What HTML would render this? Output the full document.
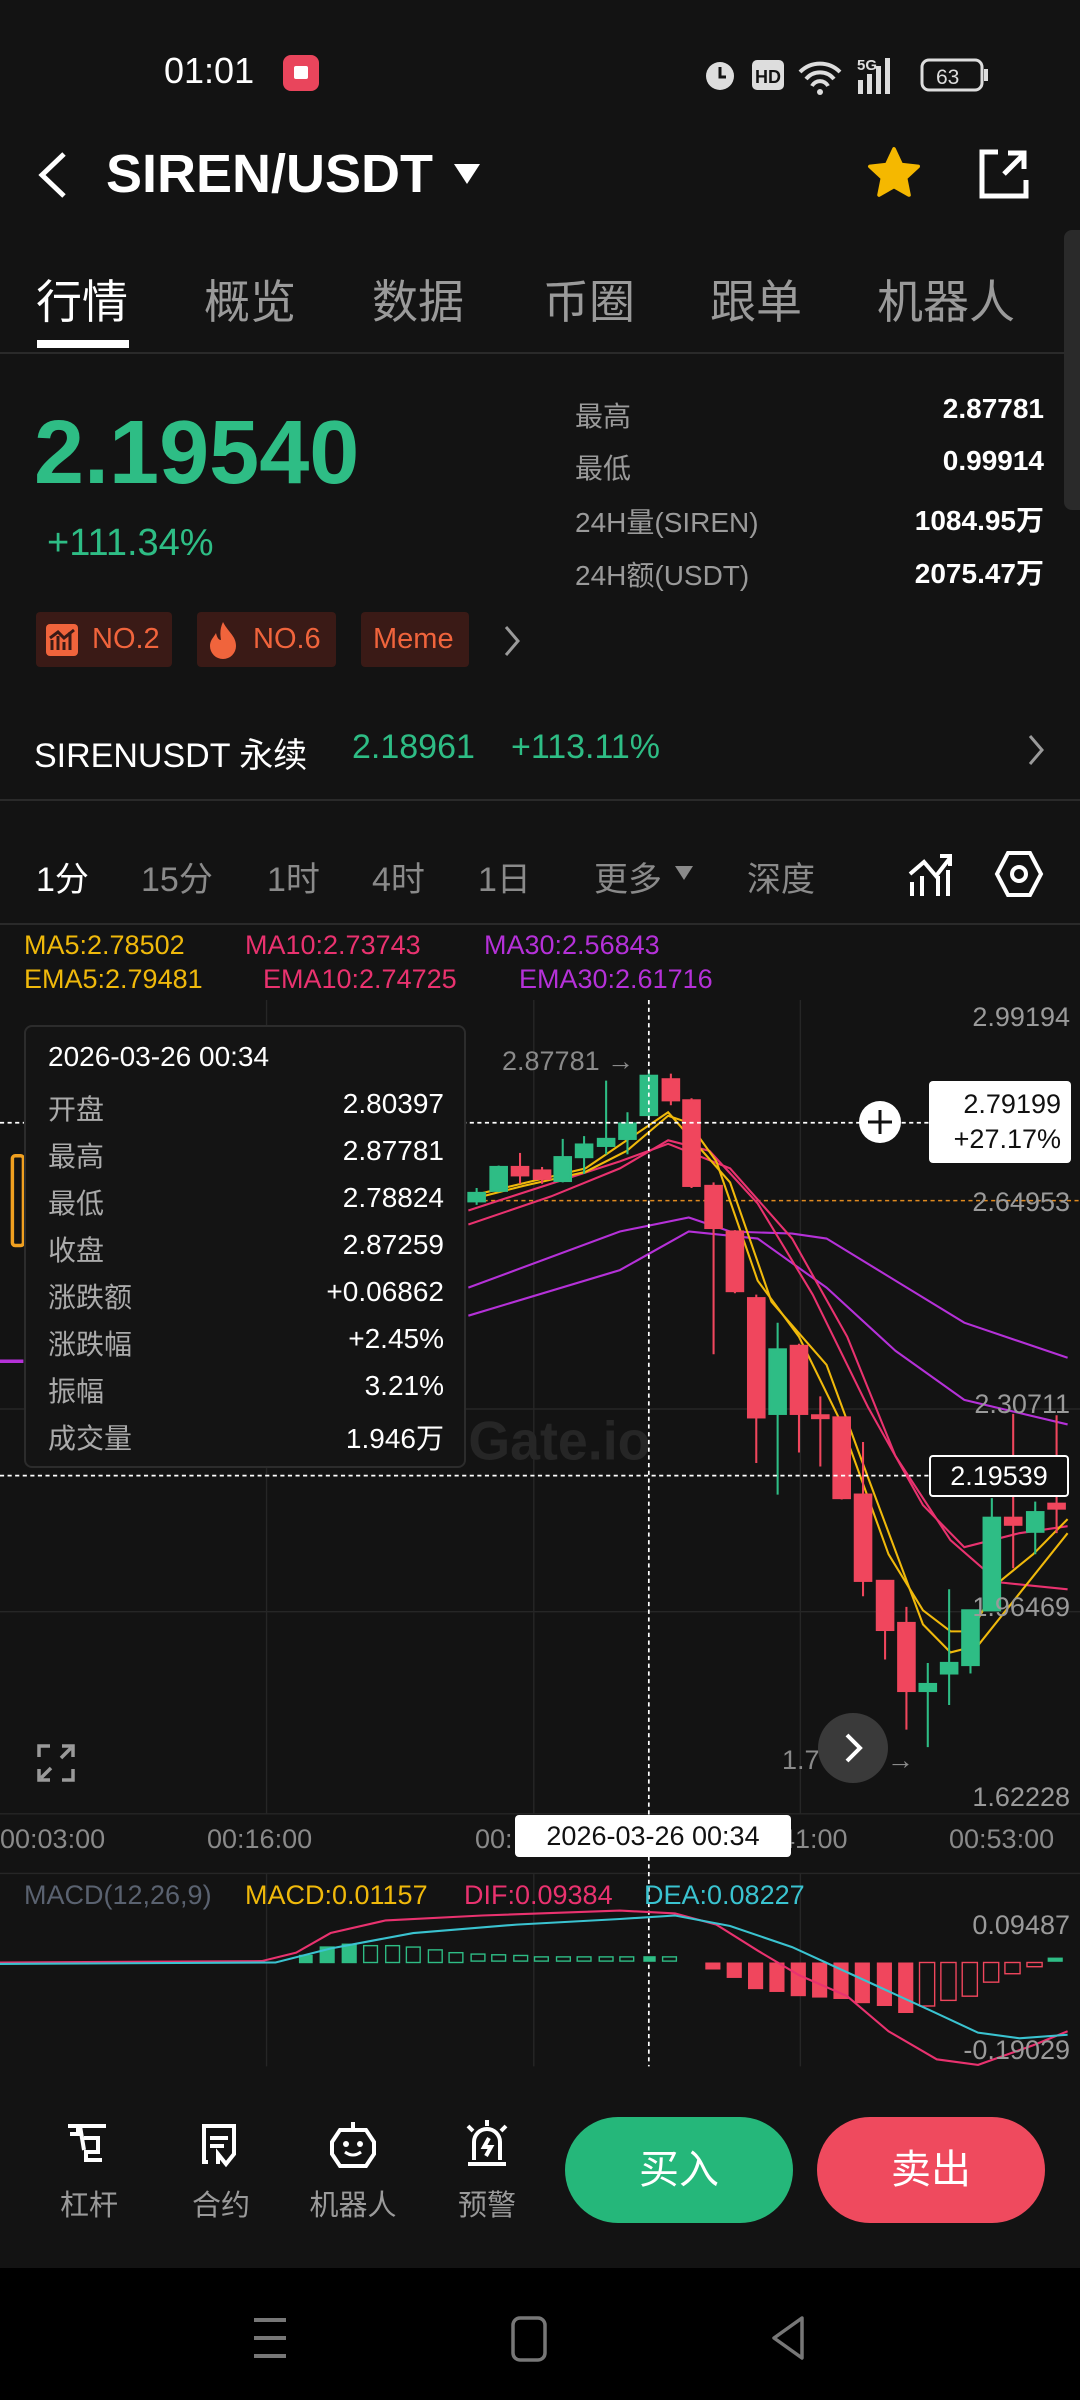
<!DOCTYPE html>
<html><head><meta charset="utf-8"><style>
*{margin:0;padding:0;box-sizing:border-box}
body{width:1080px;height:2400px;background:#131313;color:#fff;font-family:"Liberation Sans","Noto Sans CJK SC",sans-serif;position:relative;overflow:hidden}
.a{position:absolute;white-space:nowrap}
.g{color:#2ebd85}.gr{color:#8a8a8a}
.tab{position:absolute;top:266px;font-size:46px;color:#9a9a9a}
.lbl{position:absolute;left:575px;font-size:28px;color:#9a9a9a}
.val{position:absolute;right:36px;font-size:28px;color:#fff;font-weight:bold}
.badge{position:absolute;top:612px;height:55px;background:#3a1a16;border-radius:4px;color:#f0643c;font-size:29px;line-height:55px;padding:0 12px}
.iv{position:absolute;top:852px;font-size:34px;color:#8a8a8a}
.tt{position:absolute;left:48px;font-size:28px;color:#aaa}
.tv{position:absolute;right:636px;font-size:28px;color:#fff}
.ax{position:absolute;right:10px;font-size:27px;color:#9a9a9a}
.nl{position:absolute;top:2182px;font-size:29px;color:#9a9a9a;width:110px;text-align:center}
</style></head><body>
<!-- status bar -->
<div class="a" style="left:164px;top:50px;font-size:36px">01:01</div>
<div class="a" style="left:283px;top:55px;width:36px;height:36px;background:#e9455c;border-radius:8px"></div>
<div class="a" style="left:294px;top:66px;width:14px;height:13px;background:#fff;border-radius:2px"></div>
<svg class="a" style="left:700px;top:52px" width="290" height="44" viewBox="0 0 290 44">
<circle cx="20" cy="24" r="14" fill="#ddd"/><path d="M20 15v10h6" stroke="#131313" stroke-width="3" fill="none"/>
<rect x="52" y="8" width="32" height="30" rx="5" fill="#ddd"/><text x="55" y="31" font-size="18" font-weight="bold" fill="#131313" font-family="Liberation Sans">HD</text>
<path d="M100 20a28 28 0 0 1 40 0M106 27a18 18 0 0 1 28 0M112 34a9 9 0 0 1 16 0" stroke="#ddd" stroke-width="4" fill="none"/><circle cx="120" cy="40" r="3" fill="#ddd"/>
<text x="157" y="18" font-size="15" font-weight="bold" fill="#ddd" font-family="Liberation Sans">5G</text>
<rect x="158" y="28" width="5" height="14" fill="#ddd"/><rect x="167" y="22" width="5" height="20" fill="#ddd"/><rect x="176" y="14" width="5" height="28" fill="#ddd"/><rect x="185" y="6" width="5" height="36" fill="#ddd"/>
<rect x="222" y="8" width="60" height="30" rx="7" fill="none" stroke="#ddd" stroke-width="3"/><rect x="284" y="17" width="4" height="12" fill="#ddd"/>
<text x="236" y="32" font-size="21" fill="#ddd" font-family="Liberation Sans">63</text></svg>
<!-- header -->
<svg class="a" style="left:34px;top:150px" width="36" height="50"><path d="M30 4L8 25l22 21" stroke="#fff" stroke-width="5" fill="none"/></svg>
<div class="a" style="left:106px;top:143px;font-size:54px;font-weight:bold">SIREN/USDT</div>
<svg class="a" style="left:452px;top:160px" width="30" height="28"><path d="M2 4h26L15 24z" fill="#fff"/></svg>
<svg class="a" style="left:864px;top:144px" width="60" height="58" viewBox="0 0 24 24"><path d="M12 2l3 6.5 7 .8-5.2 4.8 1.4 7L12 17.6 5.8 21.1l1.4-7L2 9.3l7-.8z" fill="#f5b800" stroke="#f5b800" stroke-width="1.5" stroke-linejoin="round"/></svg>
<svg class="a" style="left:976px;top:148px" width="54" height="54" viewBox="0 0 54 54"><path d="M22 4H6v44h44V32" stroke="#fff" stroke-width="5" fill="none"/><path d="M28 26L48 6M32 5h16v16" stroke="#fff" stroke-width="5" fill="none"/></svg>
<div class="a" style="left:1064px;top:230px;width:16px;height:280px;background:#2a2a2a;border-radius:8px 0 0 8px"></div>
<!-- tabs -->
<div class="tab" style="left:36px;color:#fff">行情</div>
<div class="tab" style="left:204px">概览</div>
<div class="tab" style="left:372px">数据</div>
<div class="tab" style="left:543px">币圈</div>
<div class="tab" style="left:710px">跟单</div>
<div class="tab" style="left:877px">机器人</div>
<div class="a" style="left:37px;top:340px;width:92px;height:8px;background:#fff"></div>
<div class="a" style="left:0;top:352px;width:1080px;height:2px;background:#2a2a2a"></div>
<!-- price -->
<div class="a g" style="left:34px;top:402px;font-size:90px;font-weight:bold">2.19540</div>
<div class="a g" style="left:47px;top:522px;font-size:38px">+111.34%</div>
<div class="lbl" style="top:395px">最高</div><div class="val" style="top:393px">2.87781</div>
<div class="lbl" style="top:447px">最低</div><div class="val" style="top:445px">0.99914</div>
<div class="lbl" style="top:501px">24H量(SIREN)</div><div class="val" style="top:499px">1084.95万</div>
<div class="lbl" style="top:554px">24H额(USDT)</div><div class="val" style="top:552px">2075.47万</div>
<div class="badge" style="left:36px;width:136px;padding-left:56px">NO.2</div>
<svg class="a" style="left:46px;top:624px" width="32" height="32"><rect x="0" y="0" width="32" height="32" rx="4" fill="#f0643c"/><path d="M6 26V16M12 26V12M18 26V18M24 26V8M4 14l8-6 6 6 10-8" stroke="#3a1a16" stroke-width="3" fill="none"/></svg>
<div class="badge" style="left:197px;width:139px;padding-left:56px">NO.6</div>
<svg class="a" style="left:208px;top:620px" width="30" height="40"><path d="M15 2C20 12 28 16 28 26a13 13 0 0 1-26 0c0-6 4-9 6-13 1 5 3 7 5 7C12 14 12 8 15 2z" fill="#f0643c"/></svg>
<div class="badge" style="left:361px;width:108px">Meme</div>
<svg class="a" style="left:502px;top:624px" width="20" height="34"><path d="M4 3l12 14L4 31" stroke="#9a9a9a" stroke-width="3" fill="none"/></svg>
<!-- perp row -->
<div class="a" style="left:34px;top:728px;font-size:34px">SIRENUSDT 永续</div>
<div class="a g" style="left:352px;top:728px;font-size:34px">2.18961</div>
<div class="a g" style="left:511px;top:728px;font-size:34px">+113.11%</div>
<svg class="a" style="left:1026px;top:733px" width="20" height="34"><path d="M4 3l12 14L4 31" stroke="#9a9a9a" stroke-width="3" fill="none"/></svg>
<div class="a" style="left:0;top:799px;width:1080px;height:2px;background:#2a2a2a"></div>
<!-- intervals -->
<div class="iv" style="left:36px;color:#fff">1分</div>
<div class="iv" style="left:141px">15分</div>
<div class="iv" style="left:267px">1时</div>
<div class="iv" style="left:372px">4时</div>
<div class="iv" style="left:478px">1日</div>
<div class="iv" style="left:594px">更多</div>
<svg class="a" style="left:674px;top:864px" width="20" height="18"><path d="M1 2h18L10 16z" fill="#8a8a8a"/></svg>
<div class="iv" style="left:747px">深度</div>
<svg class="a" style="left:906px;top:852px" width="50" height="46"><path d="M6 44V30M16 44V24M32 44V24M42 44V18M4 22l14-12 12 14L44 6M34 4h10v10" stroke="#fff" stroke-width="4" fill="none"/></svg>
<svg class="a" style="left:994px;top:850px" width="50" height="48"><path d="M14 3h22l11 21-11 21H14L3 24z" stroke="#fff" stroke-width="4" fill="none"/><circle cx="25" cy="24" r="7" stroke="#fff" stroke-width="4" fill="none"/></svg>
<div class="a" style="left:0;top:923px;width:1080px;height:2px;background:#2a2a2a"></div>
<div class="a" style="left:24px;top:930px;font-size:27px;color:#f0b90b">MA5:2.78502</div>
<div class="a" style="left:245px;top:930px;font-size:27px;color:#e9326f">MA10:2.73743</div>
<div class="a" style="left:484px;top:930px;font-size:27px;color:#b531d8">MA30:2.56843</div>
<div class="a" style="left:24px;top:964px;font-size:27px;color:#f0b90b">EMA5:2.79481</div>
<div class="a" style="left:263px;top:964px;font-size:27px;color:#e9326f">EMA10:2.74725</div>
<div class="a" style="left:519px;top:964px;font-size:27px;color:#b531d8">EMA30:2.61716</div>
<!-- chart -->
<svg class="a" style="left:0;top:1000px" width="1080" height="1100" viewBox="0 0 1568 1568" preserveAspectRatio="none">
<g stroke="#262626" stroke-width="2">
<line x1="0" y1="583" x2="1568" y2="583"/><line x1="0" y1="872" x2="1568" y2="872"/>
<line x1="387" y1="0" x2="387" y2="1160"/><line x1="775" y1="0" x2="775" y2="1160"/><line x1="1162" y1="0" x2="1162" y2="1160"/>
<line x1="387" y1="1245" x2="387" y2="1520"/><line x1="775" y1="1245" x2="775" y2="1520"/><line x1="1162" y1="1245" x2="1162" y2="1520"/>
<line x1="0" y1="1160" x2="1568" y2="1160"/><line x1="0" y1="1245" x2="1568" y2="1245"/></g>
<text x="680" y="655" font-size="78" font-weight="bold" fill="#262626" font-family="Liberation Sans">Gate.io</text>
<line x1="680" y1="286" x2="1568" y2="286" stroke="#e08a20" stroke-width="2" stroke-dasharray="6 5"/>
<g fill="none" stroke-width="3">
<polyline stroke="#b531d8" points="680,410 900,330 1000,310 1060,330 1150,333 1200,340 1300,400 1400,460 1550,510"/>
<polyline stroke="#b531d8" points="680,450 900,385 1000,330 1100,340 1200,410 1300,500 1400,570 1550,605"/>
<polyline stroke="#e9326f" points="680,320 800,280 900,240 970,200 1030,215 1100,290 1180,420 1260,580 1340,720 1400,780 1480,760 1550,750"/>
<polyline stroke="#e9326f" points="680,300 900,230 970,205 1060,240 1150,340 1230,480 1300,650 1380,770 1450,830 1550,840"/>
<polyline stroke="#f0b90b" points="680,285 760,265 850,245 910,215 970,165 1000,175 1040,230 1100,400 1160,480 1220,600 1290,790 1340,870 1380,900 1410,900 1450,830 1500,790 1550,740"/>
<polyline stroke="#f0b90b" points="680,280 850,240 970,160 1060,260 1120,430 1200,520 1260,680 1340,890 1380,930 1420,920 1550,760"/>
</g>
<g stroke-width="3">
<g fill="#2ebd85" stroke="#2ebd85">
<line x1="692" y1="268" x2="692" y2="292"/><rect x="680" y="275" width="24" height="12"/>
<line x1="724" y1="236" x2="724" y2="274"/><rect x="712" y="238" width="24" height="34"/>
<line x1="817" y1="198" x2="817" y2="260"/><rect x="805" y="224" width="24" height="34"/>
<line x1="848" y1="194" x2="848" y2="248"/><rect x="836" y="206" width="24" height="18"/>
<line x1="880" y1="115" x2="880" y2="220"/><rect x="868" y="198" width="24" height="10"/>
<line x1="911" y1="160" x2="911" y2="220"/><rect x="899" y="176" width="24" height="22"/>
<line x1="942" y1="100" x2="942" y2="170"/><rect x="930" y="108" width="24" height="56"/>
<line x1="1129" y1="460" x2="1129" y2="705"/><rect x="1117" y="498" width="24" height="92"/>
<line x1="1347" y1="945" x2="1347" y2="1065"/><rect x="1335" y="975" width="24" height="10"/>
<line x1="1378" y1="840" x2="1378" y2="1005"/><rect x="1366" y="945" width="24" height="15"/>
<line x1="1409" y1="870" x2="1409" y2="960"/><rect x="1397" y="870" width="24" height="78"/>
<line x1="1440" y1="710" x2="1440" y2="870"/><rect x="1428" y="738" width="24" height="132"/>
<line x1="1503" y1="715" x2="1503" y2="790"/><rect x="1491" y="730" width="24" height="28"/>
</g>
<g fill="#f0465d" stroke="#f0465d">
<line x1="755" y1="218" x2="755" y2="262"/><rect x="743" y="238" width="24" height="12"/>
<line x1="787" y1="238" x2="787" y2="262"/><rect x="775" y="243" width="24" height="12"/>
<line x1="974" y1="105" x2="974" y2="150"/><rect x="962" y="113" width="24" height="30"/>
<line x1="1004" y1="140" x2="1004" y2="268"/><rect x="992" y="143" width="24" height="122"/>
<line x1="1036" y1="260" x2="1036" y2="505"/><rect x="1024" y="265" width="24" height="60"/>
<line x1="1067" y1="328" x2="1067" y2="418"/><rect x="1055" y="330" width="24" height="85"/>
<line x1="1098" y1="420" x2="1098" y2="660"/><rect x="1086" y="425" width="24" height="170"/>
<line x1="1160" y1="490" x2="1160" y2="645"/><rect x="1148" y="493" width="24" height="97"/>
<line x1="1191" y1="565" x2="1191" y2="665"/><rect x="1179" y="592" width="24" height="4"/>
<line x1="1222" y1="595" x2="1222" y2="712"/><rect x="1210" y="595" width="24" height="115"/>
<line x1="1253" y1="630" x2="1253" y2="850"/><rect x="1241" y="705" width="24" height="123"/>
<line x1="1285" y1="828" x2="1285" y2="940"/><rect x="1273" y="828" width="24" height="70"/>
<line x1="1316" y1="865" x2="1316" y2="1040"/><rect x="1304" y="888" width="24" height="97"/>
<line x1="1471" y1="590" x2="1471" y2="810"/><rect x="1459" y="738" width="24" height="10"/>
<line x1="1534" y1="592" x2="1534" y2="760"/><rect x="1522" y="718" width="24" height="7"/>
</g></g>
<g stroke="#fff" stroke-width="2.5" stroke-dasharray="6 5">
<line x1="942" y1="0" x2="942" y2="1520"/><line x1="0" y1="175" x2="1350" y2="175"/><line x1="0" y1="678" x2="1350" y2="678"/></g>
<line x1="0" y1="515" x2="34" y2="515" stroke="#b531d8" stroke-width="5"/>
<rect x="18" y="222" width="16" height="128" rx="4" fill="none" stroke="#f0a020" stroke-width="5"/>
<!-- macd -->
<g fill="#2ebd85" stroke="#2ebd85" stroke-width="2">
<rect x="435" y="1362" width="18" height="10"/><rect x="465" y="1350" width="20" height="22"/><rect x="497" y="1346" width="20" height="26"/>
<rect x="935" y="1364" width="16" height="6"/><rect x="1522" y="1366" width="20" height="4"/></g>
<g fill="none" stroke="#2ebd85" stroke-width="2">
<rect x="528" y="1348" width="20" height="24"/><rect x="560" y="1348" width="20" height="24"/><rect x="590" y="1350" width="20" height="22"/><rect x="622" y="1354" width="20" height="18"/><rect x="652" y="1358" width="20" height="14"/><rect x="684" y="1360" width="20" height="10"/><rect x="714" y="1361" width="20" height="9"/><rect x="746" y="1362" width="20" height="8"/><rect x="776" y="1364" width="20" height="6"/><rect x="808" y="1364" width="20" height="6"/><rect x="838" y="1364" width="20" height="6"/><rect x="870" y="1364" width="20" height="6"/><rect x="900" y="1364" width="20" height="6"/><rect x="962" y="1364" width="20" height="6"/></g>
<g fill="#f0465d"><rect x="1024" y="1372" width="22" height="10"/><rect x="1055" y="1372" width="22" height="22"/><rect x="1086" y="1372" width="22" height="38"/><rect x="1117" y="1372" width="22" height="42"/><rect x="1148" y="1372" width="22" height="48"/><rect x="1179" y="1372" width="22" height="50"/><rect x="1210" y="1372" width="22" height="52"/><rect x="1241" y="1372" width="22" height="58"/><rect x="1273" y="1372" width="22" height="62"/><rect x="1304" y="1372" width="22" height="72"/></g>
<g fill="none" stroke="#f0465d" stroke-width="2"><rect x="1335" y="1372" width="22" height="62"/><rect x="1366" y="1372" width="22" height="54"/><rect x="1397" y="1372" width="22" height="48"/><rect x="1428" y="1372" width="22" height="28"/><rect x="1459" y="1372" width="22" height="16"/><rect x="1491" y="1372" width="22" height="6"/></g>
<polyline fill="none" stroke="#e9326f" stroke-width="3" points="0,1372 380,1370 430,1358 480,1330 560,1312 700,1305 900,1298 980,1302 1040,1318 1100,1355 1160,1390 1230,1420 1290,1470 1360,1510 1420,1518 1500,1490 1550,1470"/>
<polyline fill="none" stroke="#3ac3d0" stroke-width="3" points="0,1374 400,1372 480,1352 600,1330 750,1318 900,1310 980,1305 1060,1320 1150,1350 1250,1395 1350,1440 1420,1472 1480,1480 1550,1475"/>
</svg>
<!-- tooltip -->
<div class="a" style="left:24px;top:1025px;width:442px;height:443px;background:#141414;border:2px solid #2c2c2c;border-radius:8px"></div>
<div class="a" style="left:48px;top:1041px;font-size:28px">2026-03-26 00:34</div>
<div class="tt" style="top:1088px">开盘</div><div class="tv" style="top:1088px">2.80397</div>
<div class="tt" style="top:1135px">最高</div><div class="tv" style="top:1135px">2.87781</div>
<div class="tt" style="top:1182px">最低</div><div class="tv" style="top:1182px">2.78824</div>
<div class="tt" style="top:1229px">收盘</div><div class="tv" style="top:1229px">2.87259</div>
<div class="tt" style="top:1276px">涨跌额</div><div class="tv g" style="top:1276px">+0.06862</div>
<div class="tt" style="top:1323px">涨跌幅</div><div class="tv g" style="top:1323px">+2.45%</div>
<div class="tt" style="top:1370px">振幅</div><div class="tv" style="top:1370px">3.21%</div>
<div class="tt" style="top:1417px">成交量</div><div class="tv" style="top:1417px">1.946万</div>
<!-- axis labels -->
<div class="ax" style="top:1002px">2.99194</div>
<div class="ax" style="top:1187px">2.64953</div>
<div class="ax" style="top:1389px">2.30711</div>
<div class="ax" style="top:1592px">1.96469</div>
<div class="ax" style="top:1782px">1.62228</div>
<div class="a gr" style="left:502px;top:1046px;font-size:27px">2.87781 →</div>
<div class="a gr" style="left:782px;top:1745px;font-size:27px">1.7&nbsp;&nbsp;&nbsp;&nbsp;&nbsp;&nbsp;1 →</div>
<div class="a" style="left:929px;top:1081px;width:142px;height:82px;background:#fff;border-radius:4px;color:#111;font-size:27px;text-align:right;padding:6px 10px 0 0;line-height:35px">2.79199<br>+27.17%</div>
<svg class="a" style="left:858px;top:1100px" width="44" height="44"><circle cx="22" cy="22" r="21" fill="#fff"/><path d="M22 10v24M10 22h24" stroke="#111" stroke-width="3"/></svg>
<div class="a" style="left:929px;top:1455px;width:140px;height:42px;background:#111;border:2px solid #fff;border-radius:4px;font-size:27px;text-align:center;line-height:38px">2.19539</div>
<svg class="a" style="left:818px;top:1713px" width="70" height="70"><circle cx="35" cy="35" r="35" fill="#3a3a3a"/><path d="M29 22l13 13-13 13" stroke="#fff" stroke-width="4" fill="none"/></svg>
<svg class="a" style="left:36px;top:1743px" width="40" height="40"><path d="M3 14V3h11M26 3h11v11M37 26v11H26M14 37H3V26M5 35l10-10M35 5L25 15" stroke="#9a9a9a" stroke-width="3.5" fill="none"/></svg>
<div class="a gr" style="left:0;top:1824px;font-size:27px">00:03:00</div>
<div class="a gr" style="left:207px;top:1824px;font-size:27px">00:16:00</div>
<div class="a gr" style="left:475px;top:1824px;font-size:27px">00:</div>
<div class="a gr" style="left:780px;top:1824px;font-size:27px">41:00</div>
<div class="a gr" style="left:949px;top:1824px;font-size:27px">00:53:00</div>
<div class="a" style="left:515px;top:1815px;width:276px;height:42px;background:#fff;border-radius:4px;color:#111;font-size:27px;text-align:center;line-height:42px">2026-03-26 00:34</div>
<div class="a" style="left:24px;top:1880px;font-size:27px;color:#5a6270">MACD(12,26,9)</div>
<div class="a" style="left:245px;top:1880px;font-size:27px;color:#f0b90b">MACD:0.01157</div>
<div class="a" style="left:464px;top:1880px;font-size:27px;color:#e9326f">DIF:0.09384</div>
<div class="a" style="left:644px;top:1880px;font-size:27px;color:#3ac3d0">DEA:0.08227</div>
<div class="ax" style="top:1910px">0.09487</div>
<div class="ax" style="top:2035px">-0.19029</div>
<!-- bottom nav -->
<svg class="a" style="left:64px;top:2122px" width="46" height="44"><path d="M4 4h38M14 4v8h-8M16 4l4 24M20 16h14v14H22v8h16" stroke="#fff" stroke-width="4" fill="none"/></svg>
<svg class="a" style="left:200px;top:2122px" width="44" height="46"><path d="M8 40H4V4h30v28l-8 10-8-10v10M10 16h18M10 24h14" stroke="#fff" stroke-width="4" fill="none"/></svg>
<svg class="a" style="left:328px;top:2120px" width="50" height="50"><path d="M25 2v8M12 10h26l8 12v12l-8 12H12L4 34V22z" stroke="#fff" stroke-width="4" fill="none"/><circle cx="18" cy="24" r="3" fill="#fff"/><circle cx="32" cy="24" r="3" fill="#fff"/><path d="M17 32q8 6 16 0" stroke="#fff" stroke-width="3" fill="none"/></svg>
<svg class="a" style="left:462px;top:2120px" width="50" height="50"><path d="M25 0v6M6 6l5 5M44 6l-5 5M12 40V22a13 13 0 0 1 26 0v18M6 44h38M27 18l-5 9h7l-5 9" stroke="#fff" stroke-width="4" fill="none"/></svg>
<div class="nl" style="left:34px">杠杆</div>
<div class="nl" style="left:166px">合约</div>
<div class="nl" style="left:298px">机器人</div>
<div class="nl" style="left:432px">预警</div>
<div class="a" style="left:565px;top:2117px;width:228px;height:106px;border-radius:53px;background:#25b77a;font-size:40px;text-align:center;line-height:106px">买入</div>
<div class="a" style="left:817px;top:2117px;width:228px;height:106px;border-radius:53px;background:#ef4a5e;font-size:40px;text-align:center;line-height:106px">卖出</div>
<div class="a" style="left:0;top:2268px;width:1080px;height:132px;background:#000"></div>
<svg class="a" style="left:250px;top:2314px" width="560" height="50"><path d="M4 6h32M4 24h32M4 42h32" stroke="#777" stroke-width="4"/><rect x="263" y="4" width="32" height="42" rx="7" stroke="#777" stroke-width="3.5" fill="none"/><path d="M552 4L524 24l28 20z" stroke="#777" stroke-width="3.5" fill="none" stroke-linejoin="round"/></svg>
</body></html>
